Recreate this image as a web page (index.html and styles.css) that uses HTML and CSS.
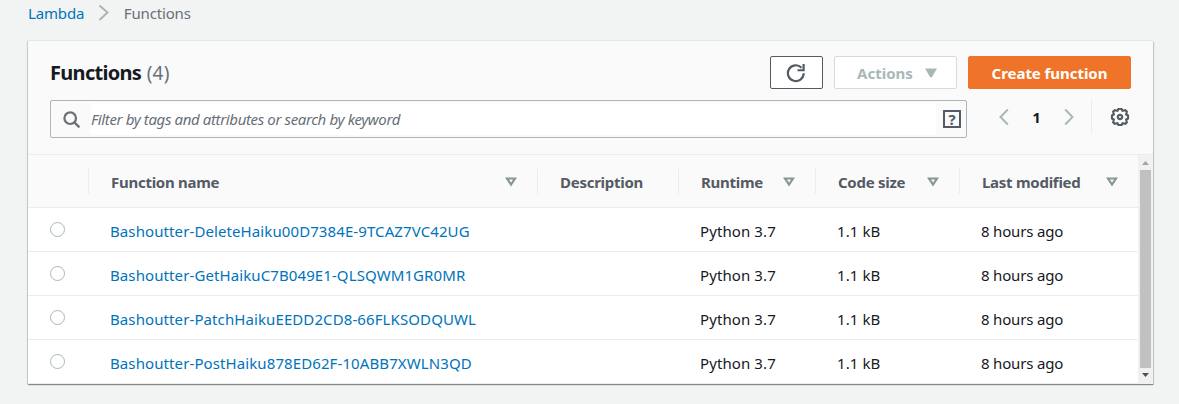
FILE: index.html
```html
<!DOCTYPE html>
<html lang="en">
<head>
<meta charset="utf-8">
<title>Lambda Functions</title>
<link rel="stylesheet" href="styles.css">
</head>
<body>
<nav class="breadcrumb">
  <a href="#">Lambda</a>
  <svg width="12" height="18" viewBox="0 0 12 18"><path d="M1.5 1.5 9.5 8.5 1.5 16"/></svg>
  <span>Functions</span>
</nav>
<main class="panel">
  <header class="top">
    <div class="title-row">
      <h1>Functions <span>(4)</span></h1>
      <button class="btn refresh" aria-label="Refresh"><svg width="20" height="20" viewBox="0 0 20 20"><path class="line" d="M17.7 10.3A7.9 7.9 0 1 1 15.5 4.7"/><path class="fill" d="M18.7 1v7.3H11.5V6.2h5V1z"/></svg></button>
      <button class="btn actions"><span>Actions</span><svg width="12" height="10" viewBox="0 0 12 10"><path d="M0 .5h12L6.8 9.3H5.2z"/></svg></button>
      <button class="btn create"><span>Create function</span></button>
    </div>
    <div class="filter-row">
      <div class="search">
        <svg class="lens" width="18" height="18" viewBox="0 0 18 18"><circle cx="7.2" cy="7.2" r="5.8"/><path d="m11.4 11.4 5 5"/></svg>
        <div class="field"><span>Filter by tags and attributes or search by keyword</span></div>
        <div class="help"><span>?</span></div>
      </div>
      <div class="pager">
        <svg width="10" height="18" viewBox="0 0 10 18"><path d="M8.8 1.5 1.5 9l7.3 7.5"/></svg>
        <b>1</b>
        <svg width="10" height="18" viewBox="0 0 10 18"><path d="M1.2 1.5 8.5 9l-7.3 7.5"/></svg>
      </div>
      <div class="settings"><svg width="20" height="20" viewBox="-10 -10 20 20"><path d="M-1.6-8h3.2L2.5-6.2 5.3-6.8 6.8-5.3 6.2-2.5 8-1.6v3.2L6.2 2.5 6.8 5.3 5.3 6.8 2.5 6.2 1.6 8h-3.2L-2.5 6.2-5.3 6.8-6.8 5.3-6.2 2.5-8 1.6v-3.2L-6.2-2.5-6.8-5.3-5.3-6.8-2.5-6.2z"/><circle r="2.2"/></svg></div>
    </div>
  </header>
  <div class="scroll">
    <div class="table">
      <div class="row head">
        <div></div>
        <div><span>Function name</span><i class="sort"><svg width="12" height="10" viewBox="0 0 12 10"><path d="M2 1.5h8L6 7.5z"/></svg></i></div>
        <div><span>Description</span></div>
        <div><span>Runtime</span><i class="sort"><svg width="12" height="10" viewBox="0 0 12 10"><path d="M2 1.5h8L6 7.5z"/></svg></i></div>
        <div><span>Code size</span><i class="sort"><svg width="12" height="10" viewBox="0 0 12 10"><path d="M2 1.5h8L6 7.5z"/></svg></i></div>
        <div><span>Last modified</span><i class="sort"><svg width="12" height="10" viewBox="0 0 12 10"><path d="M2 1.5h8L6 7.5z"/></svg></i></div>
      </div>
      <div class="row"><div><i class="radio"></i></div><div><a href="#">Bashoutter-DeleteHaiku00D7384E-9TCAZ7VC42UG</a></div><div></div><div>Python 3.7</div><div>1.1 kB</div><div class="modified">8 hours ago</div></div>
      <div class="row"><div><i class="radio"></i></div><div><a href="#">Bashoutter-GetHaikuC7B049E1-QLSQWM1GR0MR</a></div><div></div><div>Python 3.7</div><div>1.1 kB</div><div class="modified">8 hours ago</div></div>
      <div class="row"><div><i class="radio"></i></div><div><a href="#">Bashoutter-PatchHaikuEEDD2CD8-66FLKSODQUWL</a></div><div></div><div>Python 3.7</div><div>1.1 kB</div><div class="modified">8 hours ago</div></div>
      <div class="row"><div><i class="radio"></i></div><div><a href="#">Bashoutter-PostHaiku878ED62F-10ABB7XWLN3QD</a></div><div></div><div>Python 3.7</div><div>1.1 kB</div><div class="modified">8 hours ago</div></div>
    </div>
    <div class="scrollbar">
      <svg width="15" height="15" viewBox="0 0 15 15"><path fill="#a3a3a3" d="M4 10h7L7.5 6z"/></svg>
      <div class="thumb"></div>
      <svg width="15" height="15" viewBox="0 0 15 15"><path fill="#505050" d="M4 5h7L7.5 9z"/></svg>
    </div>
  </div>
</main>
</body>
</html>
```
FILE: styles.css
```css
* { box-sizing: border-box; }
body { margin: 0; height: 404px; overflow: hidden; background: #f2f3f3; color: #16191f; font: 15px/20px "Noto Sans", sans-serif; }
a { color: #0073bb; text-decoration: none; }
svg { display: block; flex: none; fill: none; }
.breadcrumb { display: flex; height: 41px; padding: 3px 28px 0; letter-spacing: -.15px; color: #687078; }
.breadcrumb svg { margin: 1px 14px 0 13.5px; stroke: #aab7b8; stroke-width: 2; }
.panel { width: 1125px; height: 343px; margin-left: 28px; background: #fff; box-shadow: 0 1px 1px #001c2460, 1px 1px 1px #001c2426, -1px 0 1px #001c2420, 0 -1px 0 #eaeded; }
.top { height: 114px; padding: 15px 22px 0; background: #fafafa; border-bottom: 1px solid #eaeded; }
.title-row { display: flex; gap: 11px; height: 33px; }
h1 { flex: 1; margin: 0; padding-top: 4px; font-size: 20px; line-height: 26px; font-weight: 700; letter-spacing: -.7px; }
h1 span { margin-left: 1px; font-weight: 400; color: #687078; font-size: 19px; letter-spacing: .2px; }
.btn { display: flex; align-items: center; justify-content: center; height: 33px; padding: 0; border: 1px solid #545b64; border-radius: 2px; background: #fff; font: 700 15px/20px "Noto Sans", sans-serif; white-space: nowrap; }
.refresh { width: 53px; padding-right: 1px; }
.refresh .line { stroke: #545b64; stroke-width: 2.2; }
.refresh .fill { fill: #545b64; }
.actions { width: 123px; gap: 12px; padding-left: 3px; color: #aab7b8; border-color: #d5dbdb; }
.actions svg { fill: #aab7b8; }
.create { width: 163px; color: #fff; background: #ef7429; border-color: #ef7429; letter-spacing: -.05px; }
.filter-row { display: flex; height: 38px; margin-top: 11px; }
.search { display: flex; width: 917px; height: 38px; border: 1px solid #aab7b8; border-radius: 2px; }
.lens { margin: 10px 10px 0 12px; stroke: #687078; stroke-width: 2.2; }
.field { flex: 1; margin: 2px 0; padding: 6px 0; background: #fff; color: #687078; font-style: italic; white-space: nowrap; letter-spacing: -.37px; }
.help { width: 18px; height: 18px; margin: 9px 5px 0 7px; border: 2px solid #545b64; color: #545b64; font: 700 15px/14px "Noto Sans", sans-serif; text-align: center; }
.pager { display: flex; align-items: center; height: 33px; margin-left: 32px; padding-top: 1px; }
.pager svg { stroke: #aab7b8; stroke-width: 2; }
.pager b { width: 55px; text-align: center; }
.settings { height: 33px; margin-left: 17px; padding: 7px 0 0 18px; border-left: 1px solid #eaeded; }
.settings path, .settings circle { stroke: #545b64; stroke-width: 2.2; }
.scroll { display: flex; height: 229px; }
.table { width: 1110px; }
.row { display: grid; grid-template-columns: 61px 449px 141px 137px 144px 178px; height: 44px; border-bottom: 1px solid #eaeded; line-height: 20px; white-space: nowrap; letter-spacing: .1px; }
.row > div { padding: 13px 0 0 21px; }
.row > div:first-child { padding: 14px 0 0 22px; }
.row > .modified { letter-spacing: -.18px; }
.head { height: 53px; background: #fafafa; color: #545b64; font-weight: 700; letter-spacing: -.27px; }
.head > div { display: flex; align-items: center; justify-content: space-between; height: 25px; margin-top: 14px; padding: 0 20.5px 0 22px; border-right: 1px solid #eaeded; }
.head > div:first-child { padding: 0; }
.head > div:last-child { border: 0; }
.head svg { stroke: #879596; stroke-width: 2.2; }
.radio { display: block; width: 15px; height: 15px; border: 1px solid #aab7b8; border-radius: 50%; }
.scrollbar { display: flex; flex-direction: column; width: 15px; background: #f1f1f1; }
.thumb { height: 198px; margin: 0 2px; background: #c1c1c1; }
```
